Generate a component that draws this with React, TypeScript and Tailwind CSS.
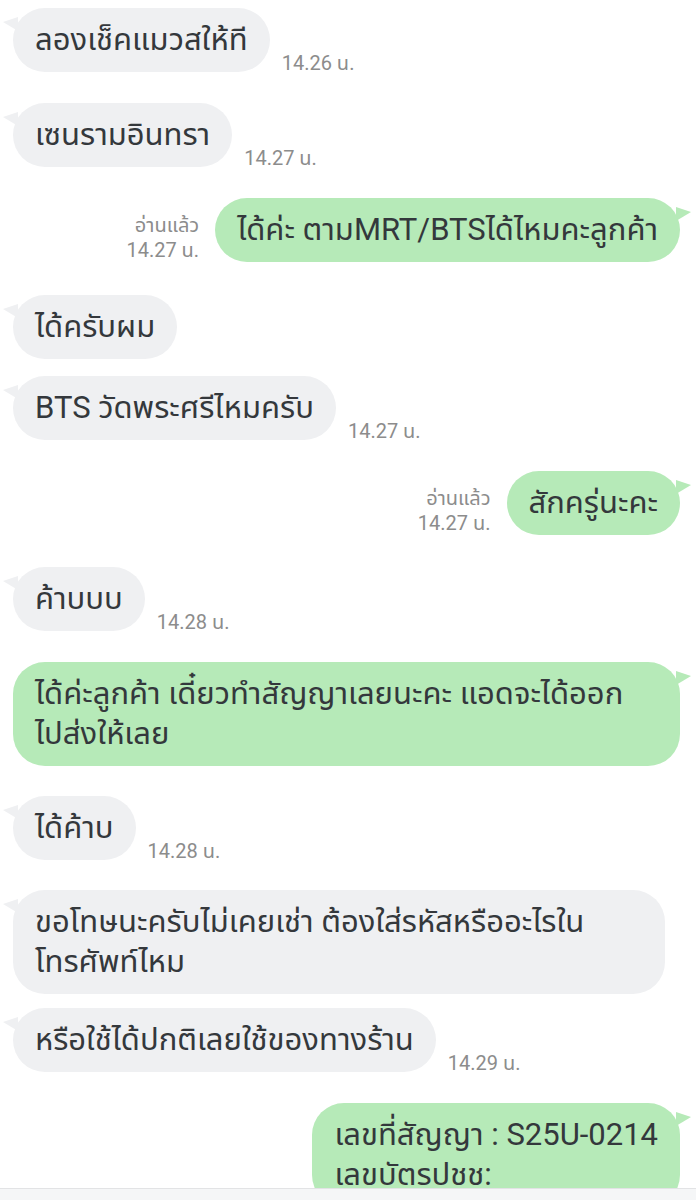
import React from 'react';

const GRAY = '#eff0f2';
const GREEN = '#b6eab8';

type Msg = {
  side: 'in' | 'out';
  lines: string[];
  time?: string;
  read?: boolean;
  mt: string;
  w?: string;
};

const messages: Msg[] = [
  { side: 'in', lines: ['ลองเช็คแมวสให้ที'], time: '14.26 น.', mt: 'mt-[8px]' },
  { side: 'in', lines: ['เซนรามอินทรา'], time: '14.27 น.', mt: 'mt-[31px]' },
  { side: 'out', lines: ['ได้ค่ะ ตามMRT/BTSได้ไหมคะลูกค้า'], time: '14.27 น.', read: true, mt: 'mt-[31px]' },
  { side: 'in', lines: ['ได้ครับผม'], mt: 'mt-[33px]' },
  { side: 'in', lines: ['BTS วัดพระศรีไหมครับ'], time: '14.27 น.', mt: 'mt-[17px]' },
  { side: 'out', lines: ['สักครู่นะคะ'], time: '14.27 น.', read: true, mt: 'mt-[31px]' },
  { side: 'in', lines: ['ค้าบบบ'], time: '14.28 น.', mt: 'mt-[32px]' },
  {
    side: 'out',
    lines: ['ได้ค่ะลูกค้า เดี๋ยวทำสัญญาเลยนะคะ แอดจะได้ออก', 'ไปส่งให้เลย'],
    mt: 'mt-[31px]',
    w: 'w-[667px]',
  },
  { side: 'in', lines: ['ได้ค้าบ'], time: '14.28 น.', mt: 'mt-[30px]' },
  {
    side: 'in',
    lines: ['ขอโทษนะครับไม่เคยเช่า ต้องใส่รหัสหรืออะไรใน', 'โทรศัพท์ไหม'],
    mt: 'mt-[30px]',
    w: 'w-[652px]',
  },
  { side: 'in', lines: ['หรือใช้ได้ปกติเลยใช้ของทางร้าน'], time: '14.29 น.', mt: 'mt-[14px]' },
  { side: 'out', lines: ['เลขที่สัญญา : S25U-0214', 'เลขบัตรปชช:'], mt: 'mt-[31px]' },
];

const font = { fontFamily: 'Roboto, "Noto Sans Thai", "Noto Sans", sans-serif' };

function Bubble({ msg }: { msg: Msg }) {
  const isIn = msg.side === 'in';
  return (
    <div
      className={`relative rounded-[32px] px-[22px] py-[12px] text-[31px] leading-[40px] text-[#34383c] whitespace-nowrap ${msg.w ?? ''}`}
      style={{ background: isIn ? GRAY : GREEN }}
    >
      {isIn ? (
        <svg className="absolute left-[-11px] top-[9px]" width="16" height="14" viewBox="0 0 16 14">
          <polygon points="1,5 16,0 16,14" fill={GRAY} />
        </svg>
      ) : (
        <svg className="absolute right-[-12px] top-[9px]" width="16" height="14" viewBox="0 0 16 14">
          <polygon points="0,0 15,5 0,14" fill={GREEN} />
        </svg>
      )}
      {msg.lines.map((l, i) => (
        <div key={i}>{l}</div>
      ))}
    </div>
  );
}

export default function App() {
  return (
    <div className="h-[1200px] w-[696px] bg-white flex flex-col overflow-hidden" style={font}>
      <div className="flex-1 overflow-hidden">
        {messages.map((m, idx) =>
          m.side === 'in' ? (
            <div key={idx} className={`flex items-end pl-[13px] ${m.mt}`}>
              <Bubble msg={m} />
              {m.time && (
                <span className="ml-[12px] mb-[-3px] text-[20px] leading-[24px] text-[#8c8c8c] whitespace-nowrap">
                  {m.time}
                </span>
              )}
            </div>
          ) : (
            <div key={idx} className={`flex items-end justify-end pr-[16px] ${m.mt}`}>
              {m.read && (
                <div className="mr-[16px] mb-[-1px] text-right text-[20px] leading-[25px] text-[#8c8c8c] whitespace-nowrap">
                  <div>อ่านแล้ว</div>
                  <div>{m.time}</div>
                </div>
              )}
              <Bubble msg={m} />
            </div>
          )
        )}
      </div>
      <div className="h-[12px] shrink-0 border-t border-[#e2e3e5] bg-[#f5f6f7]" />
    </div>
  );
}
